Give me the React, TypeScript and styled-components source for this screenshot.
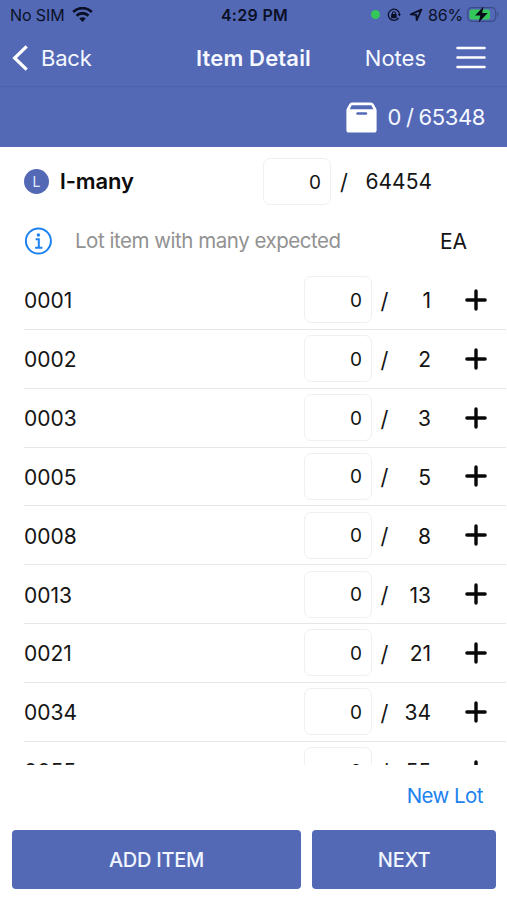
import React from 'react';
import styled, { createGlobalStyle } from 'styled-components';

const BLUE = '#5369b6';

const GlobalStyle = createGlobalStyle`
  *, *::before, *::after { box-sizing: border-box; }
  body { margin: 0; background: #fff; }
`;

const Screen = styled.main`
  display: flex;
  flex-direction: column;
  width: 507px;
  height: 900px;
  overflow: hidden;
  background: #fff;
  color: #151515;
  font-family: Inter, 'Liberation Sans', sans-serif;
  font-size: 21px;
  line-height: 1;
  white-space: nowrap;
`;

const StatusBar = styled.div`
  display: grid;
  grid-template-columns: 1fr auto 1fr;
  align-items: center;
  height: 30px;
  padding: 0 8px 0 10px;
  background: ${BLUE};
  color: #0b1027;
  font-size: 16px;
`;

const Carrier = styled.div`
  display: flex;
  align-items: center;
  gap: 7px;
  letter-spacing: -0.1px;
`;

const Clock = styled.div`
  font-weight: 600;
  letter-spacing: 0.3px;
`;

const StatusIcons = styled.div`
  display: flex;
  align-items: center;
  justify-content: flex-end;
`;

const RecordingDot = styled.span`
  width: 9px;
  height: 9px;
  margin: 0 7px 1px 0;
  border-radius: 50%;
  background: #34c759;
`;

const StatusGroup = styled.span`
  display: flex;
  align-items: center;
  gap: 8px;
`;

const Percent = styled.span`
  margin: 0 4px 0 5px;
  letter-spacing: -0.2px;
`;

const NavBar = styled.header`
  display: grid;
  grid-template-columns: 1fr auto 1fr;
  align-items: center;
  height: 57px;
  padding: 0 21px 1px 12px;
  border-bottom: 1px solid #4b60aa;
  background: ${BLUE};
  color: #f5f8ff;
  font-size: 22px;
`;

const BackButton = styled.div`
  display: flex;
  align-items: center;
  gap: 12px;
  letter-spacing: -0.2px;
`;

const Title = styled.h1`
  margin: 0;
  padding-left: 9px;
  font-size: 22px;
  font-weight: 600;
  letter-spacing: 0.15px;
`;

const NavActions = styled.div`
  display: flex;
  align-items: center;
  justify-content: flex-end;
  gap: 30px;
`;

const Summary = styled.div`
  display: flex;
  align-items: center;
  justify-content: flex-end;
  gap: 10px;
  height: 60px;
  padding-right: 22px;
  background: ${BLUE};
  color: #f5f8ff;
  font-size: 22px;
  letter-spacing: -0.4px;
  word-spacing: -0.7px;
`;

const ItemHeader = styled.section`
  display: grid;
  grid-template-columns: 36px 203px 68px 26px 75px;
  align-items: center;
  height: 68px;
  padding-left: 24px;
  padding-top: 1px;
`;

const LotBadge = styled.span`
  display: flex;
  align-items: center;
  justify-content: center;
  width: 25px;
  height: 25px;
  border-radius: 50%;
  background: ${BLUE};
  color: #e6ecff;
  font-size: 14px;
`;

const ItemName = styled.h2`
  margin: 0;
  padding-bottom: 1px;
  color: #0c0c0c;
  font-size: 22px;
  font-weight: 600;
  letter-spacing: -0.1px;
`;

const QtyBox = styled.div`
  display: flex;
  align-items: center;
  justify-content: flex-end;
  width: 68px;
  height: 47px;
  padding: 1px 9px 0 0;
  border: 1.5px solid #f0f0f0;
  border-radius: 7px;
  font-size: 19px;
`;

const Slash = styled.span`
  padding-top: 1px;
  text-align: center;
  font-size: 22px;
`;

const Amount = styled.span`
  text-align: right;
`;

const Description = styled.section`
  display: grid;
  grid-template-columns: 51px 1fr auto;
  align-items: center;
  height: 56px;
  padding: 0 40px 5px 24px;
`;

const DescriptionText = styled.span`
  padding-top: 1px;
  color: #929292;
  font-size: 20.5px;
  letter-spacing: -0.47px;
`;

const Unit = styled.span`
  padding-top: 1px;
`;

const LotList = styled.ul`
  height: 494px;
  margin: 0;
  padding: 0 0 0 24px;
  overflow: hidden;
  list-style: none;
`;

const LotRow = styled.li`
  display: grid;
  grid-template-columns: 280px 68px 25px 34px 56px;
  align-items: center;
  height: 58.85px;
  margin-right: 1px;
  border-bottom: 1px solid #e7e7e7;

  > span {
    padding-top: 2px;
  }
`;

const AddIcon = styled.svg`
  justify-self: end;
`;

const NewLot = styled.div`
  height: 65px;
  padding: 21px 24px 0 0;
  color: #1c82ef;
  font-size: 20.5px;
  letter-spacing: -0.55px;
  text-align: right;
`;

const Footer = styled.footer`
  display: grid;
  grid-template-columns: 289px 184px;
  gap: 11px;
  padding-left: 12px;
`;

const ActionButton = styled.button`
  height: 59px;
  padding: 0;
  border: 0;
  border-radius: 4px;
  background: ${BLUE};
  color: #f0f5ff;
  font: 500 20px Inter, 'Liberation Sans', sans-serif;
  letter-spacing: -0.25px;
`;

const lots: [string, number][] = [
  ['0001', 1], ['0002', 2], ['0003', 3], ['0005', 5], ['0008', 8],
  ['0013', 13], ['0021', 21], ['0034', 34], ['0055', 55],
];

const WifiIcon = () => (
  <svg width="21" height="16" viewBox="0 0 21 16" fill="none" stroke="#0b1027" strokeWidth="2.8">
    <path d="M1.2 5a13.2 13.2 0 0 1 18.6 0" />
    <path d="M4.6 8.7a8.3 8.3 0 0 1 11.8 0" />
    <path d="M10.5 14.9 7.2 11.6a4.7 4.7 0 0 1 6.6 0z" fill="#0b1027" stroke="none" />
  </svg>
);

const RotationLockIcon = () => (
  <svg width="14" height="14" viewBox="0 0 14 14" fill="none" stroke="#0b1027" strokeWidth="1.3">
    <path d="M11.7 9.8A5.6 5.6 0 1 1 12.5 6" />
    <path d="M10.8 6.1h3.1l-1.5 2.3z" fill="#0b1027" stroke="none" />
    <rect x="4.1" y="6.1" width="5.6" height="4.2" rx=".6" fill="#0b1027" stroke="none" />
    <path d="M5.4 6.5V5.2a1.5 1.5 0 0 1 3 0v1.3" strokeWidth="1.1" />
  </svg>
);

const LocationIcon = () => (
  <svg width="14" height="14" viewBox="0 0 14 14" fill="none" stroke="#0b1027" strokeWidth="1.8" strokeLinejoin="round">
    <path d="M12.4 1.6 1.8 6.4l5.5.5.4 5.2z" />
  </svg>
);

const BatteryIcon = () => (
  <svg width="32" height="18" viewBox="0 0 32 18" fill="none">
    <rect x=".7" y="1.7" width="28" height="13.6" rx="4" stroke="#3b4b87" strokeWidth="1.2" />
    <rect x="2.5" y="3.5" width="20.5" height="10" rx="2.5" fill="#34c759" />
    <path d="M30.3 6.2c1.5.6 1.5 4 0 4.6z" fill="#3b4b87" />
    <path d="M16.6.5 8 9.6h5.3l-1.6 6.8 9-9.3h-5.6z" fill="#080c18" />
  </svg>
);

const ChevronIcon = () => (
  <svg width="17" height="26" viewBox="0 0 17 26" fill="none" stroke="#fff" strokeWidth="3.2">
    <path d="M14.7 1.3 2.6 13l12.1 11.7" />
  </svg>
);

const MenuIcon = () => (
  <svg width="30" height="24" viewBox="0 0 30 24" stroke="#fff" strokeWidth="2.5" strokeLinecap="round">
    <path d="M1.5 2h27M1.5 11.5h27M1.5 21h27" />
  </svg>
);

const BoxIcon = () => (
  <svg width="31" height="31" viewBox="0 0 31 31">
    <path
      d="M6 .5h19a3 3 0 0 1 2.6 1.5l2.5 4.5a4 4 0 0 1 .5 2V28a2.6 2.6 0 0 1-2.6 2.6H3A2.6 2.6 0 0 1 .4 28V8.5a4 4 0 0 1 .5-2L3.4 2A3 3 0 0 1 6 .5z"
      fill="#fff"
    />
    <path d="M5.7 3.2h19.6l2 4H3.7z" fill={BLUE} />
    <path d="M11.5 11.5h8.5" stroke={BLUE} strokeWidth="2.4" strokeLinecap="round" />
  </svg>
);

const InfoIcon = () => (
  <svg width="28" height="28" viewBox="0 0 28 28" fill="none" stroke="#1c82ef" strokeWidth="2">
    <circle cx="14.4" cy="14" r="12.5" />
    <circle cx="14.4" cy="8" r="1.7" fill="#1c82ef" stroke="none" />
    <path d="M11.6 12.2h3.2v8.3M11.1 20.7h7.3" />
  </svg>
);

const PlusIcon = () => (
  <AddIcon width="22" height="22" viewBox="0 0 22 22" stroke="#080808" strokeWidth="3.4" strokeLinecap="round">
    <path d="M11 1.9v18.2M1.9 11h18.2" />
  </AddIcon>
);

export default function App() {
  return (
    <Screen>
      <GlobalStyle />
      <StatusBar>
        <Carrier>No SIM <WifiIcon /></Carrier>
        <Clock>4:29 PM</Clock>
        <StatusIcons>
          <RecordingDot />
          <StatusGroup>
            <RotationLockIcon />
            <LocationIcon />
          </StatusGroup>
          <Percent>86%</Percent>
          <BatteryIcon />
        </StatusIcons>
      </StatusBar>
      <NavBar>
        <BackButton><ChevronIcon />Back</BackButton>
        <Title>Item Detail</Title>
        <NavActions>Notes<MenuIcon /></NavActions>
      </NavBar>
      <Summary><BoxIcon />0 / 65348</Summary>
      <ItemHeader>
        <LotBadge>L</LotBadge>
        <ItemName>l-many</ItemName>
        <QtyBox>0</QtyBox>
        <Slash>/</Slash>
        <Amount>64454</Amount>
      </ItemHeader>
      <Description>
        <InfoIcon />
        <DescriptionText>Lot item with many expected</DescriptionText>
        <Unit>EA</Unit>
      </Description>
      <LotList>
        {lots.map(([code, quantity]) => (
          <LotRow key={code}>
            <span>{code}</span>
            <QtyBox>0</QtyBox>
            <Slash>/</Slash>
            <Amount>{quantity}</Amount>
            <PlusIcon />
          </LotRow>
        ))}
      </LotList>
      <NewLot>New Lot</NewLot>
      <Footer>
        <ActionButton>ADD ITEM</ActionButton>
        <ActionButton>NEXT</ActionButton>
      </Footer>
    </Screen>
  );
}
